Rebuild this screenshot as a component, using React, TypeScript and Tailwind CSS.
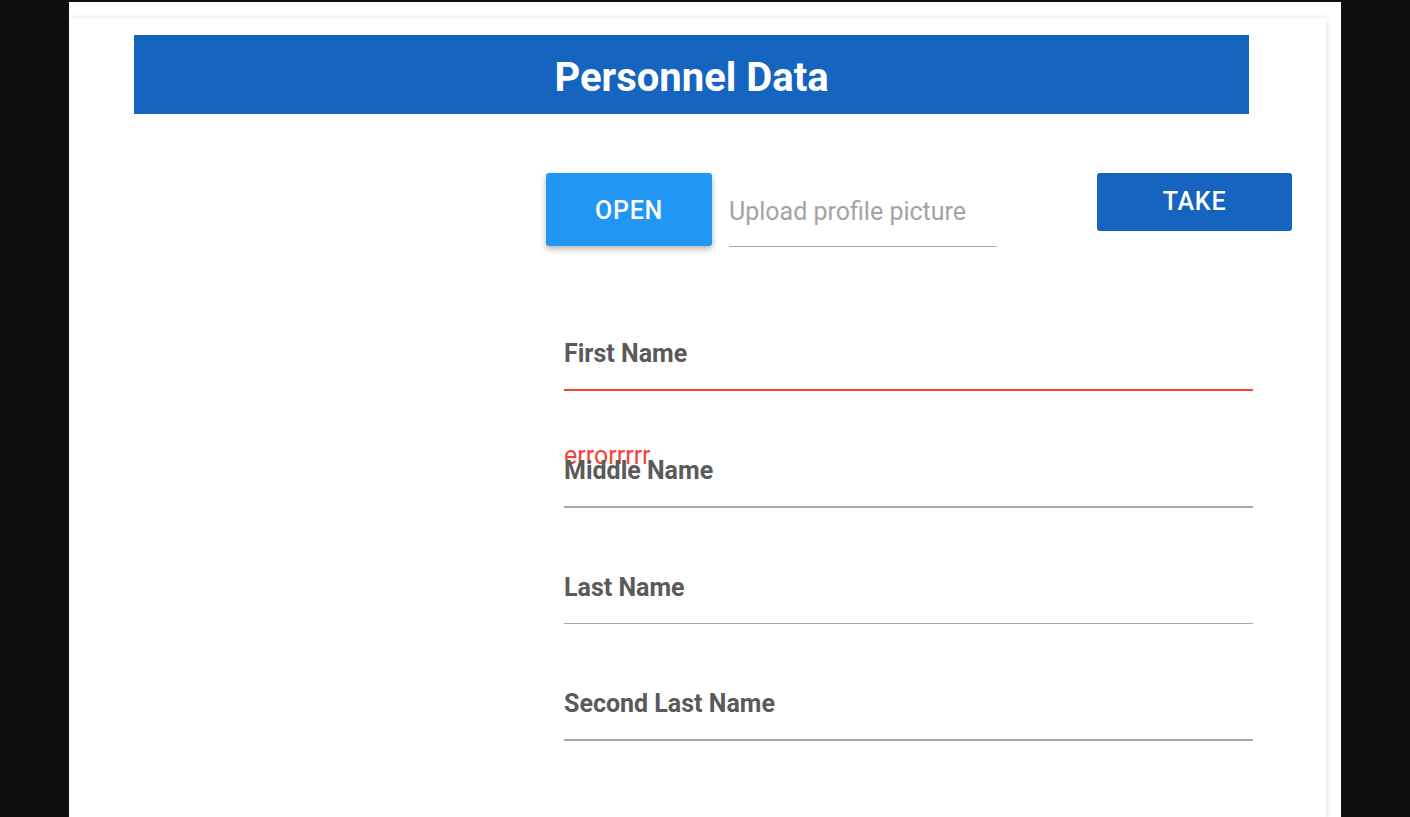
import React from "react";

const fields = [
  { label: "First Name", error: true },
  { label: "Middle Name" },
  { label: "Last Name" },
  { label: "Second Last Name" },
];

function Field({ label, error }: { label: string; error?: boolean }) {
  return (
    <div className="relative">
      <div className="flex h-[90px] items-end pb-[23px]">
        <span className="text-[25px] font-bold leading-none text-[#5a5a5a]">{label}</span>
      </div>
      <div className={error ? "h-[2px] bg-[#f44336]" : "h-[1.5px] bg-[#a8a8a8]"} />
      {error && (
        <div className="absolute left-0 top-[144px] text-[25px] leading-none text-[#f44336]">
          errorrrrr
        </div>
      )}
    </div>
  );
}

export default function App() {
  return (
    <div
      className="min-h-[817px] bg-[#0f0f0f] pt-[2px]"
      style={{ fontFamily: "Roboto, 'Noto Sans', sans-serif" }}
    >
      <div className="ml-[69px] min-h-[815px] w-[1272px] bg-white pt-4">
        <div className="min-h-[799px] w-[1257px] bg-white pl-[65px] pt-[17px] shadow-[0_1px_6px_rgba(0,0,0,0.18)]">
          <header className="flex h-[79px] w-[1115px] items-center justify-center bg-[#1565c0] pt-[7px]">
            <h1 className="text-[40px] font-bold leading-none text-white">Personnel Data</h1>
          </header>

          <div className="ml-[412px] mt-[59px] flex items-start">
            <button
              type="button"
              className="flex h-[73px] w-[166px] items-center justify-center rounded-[3px] bg-[#2196f3] pt-[3px] text-[25px] font-medium tracking-[0.03em] text-white shadow-[0_3px_6px_rgba(0,0,0,0.3)]"
            >
              OPEN
            </button>
            <div className="ml-[17px] flex h-[74px] w-[268px] items-center border-b-[1.5px] border-[#a8a8a8] pt-[4px]">
              <span className="text-[25px] leading-none text-[#a3a3a3]">Upload profile picture</span>
            </div>
            <button
              type="button"
              className="ml-[100px] flex h-[58px] w-[195px] items-center justify-center rounded-[3px] bg-[#1565c0] text-[25px] font-medium tracking-[0.03em] text-white"
            >
              TAKE
            </button>
          </div>

          <div className="ml-[430px] mt-[52px] flex w-[689px] flex-col gap-[25px]">
            {fields.map((f) => (
              <Field key={f.label} label={f.label} error={f.error} />
            ))}
          </div>
        </div>
      </div>
    </div>
  );
}
